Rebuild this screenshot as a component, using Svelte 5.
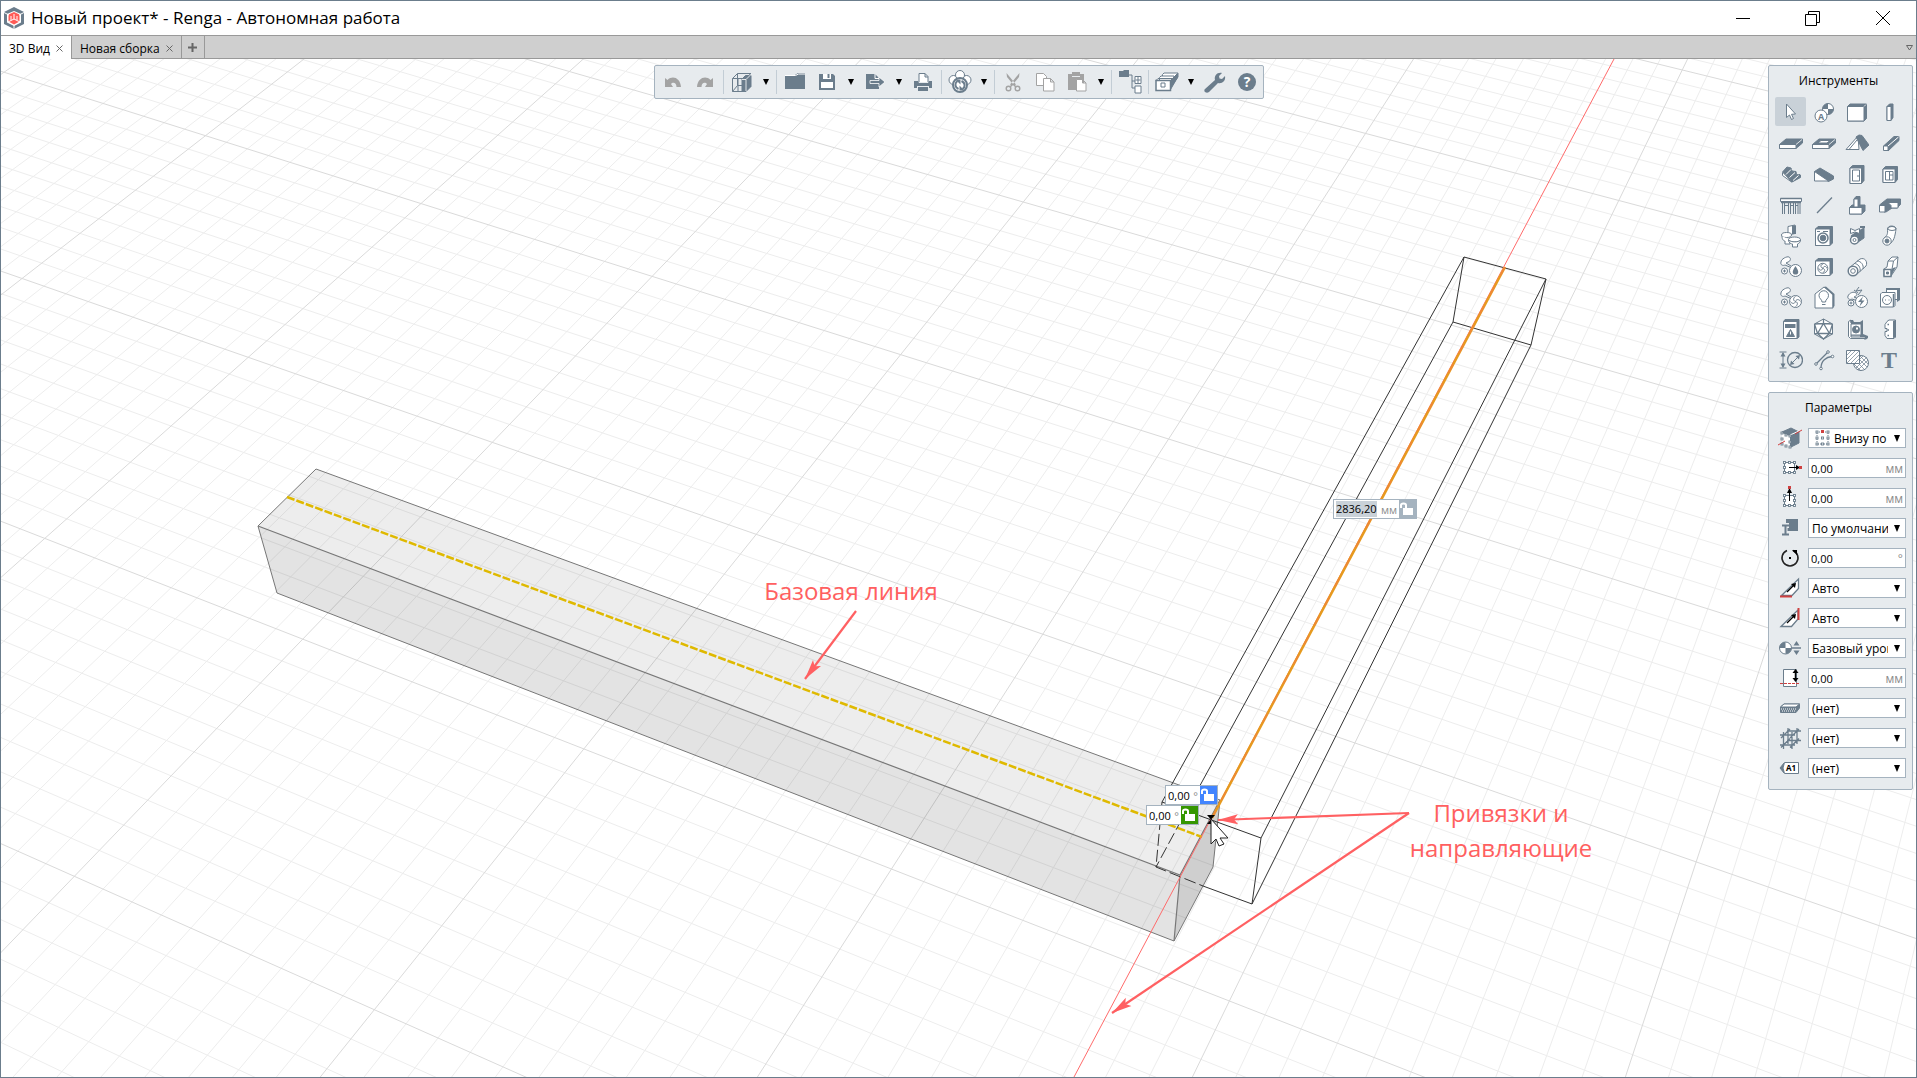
<script>
    let activeTab = $state('3D Вид');
    let activeTool = $state('select');

    const tabs = ['3D Вид', 'Новая сборка'];

    const toolbar = [
        { icon: 'undo', label: 'Отменить', off: true },
        { icon: 'redo', label: 'Повторить', off: true },
        { sep: true },
        { icon: 'cube', label: 'Вид', menu: true },
        { sep: true },
        { icon: 'folder', label: 'Открыть' },
        { icon: 'save', label: 'Сохранить', menu: true },
        { icon: 'export', label: 'Экспорт', menu: true },
        { icon: 'print', label: 'Печать' },
        { sep: true },
        { icon: 'sync', label: 'Совместная работа', menu: true },
        { sep: true },
        { icon: 'cut', label: 'Вырезать', off: true },
        { icon: 'copy', label: 'Копировать', off: true },
        { icon: 'paste', label: 'Вставить', off: true, menu: true },
        { sep: true },
        { icon: 'tree', label: 'Обозреватель проекта' },
        { sep: true },
        { icon: 'drawers', label: 'Стили', menu: true },
        { icon: 'wrench', label: 'Настройки' },
        { icon: 'help', label: 'Справка' }
    ];

    const tools = [
        ['select', 'Выбор'], ['level', 'Уровень'], ['wall', 'Стена'], ['column', 'Колонна'],
        ['floor', 'Перекрытие'], ['opening', 'Проем'], ['roof', 'Крыша'], ['beam', 'Балка'],
        ['stair', 'Лестница'], ['ramp', 'Пандус'], ['door', 'Дверь'], ['window', 'Окно'],
        ['railing', 'Ограждение'], ['line', 'Линия'], ['footing', 'Столбчатый фундамент'], ['strip', 'Ленточный фундамент'],
        ['toilet', 'Сантехника'], ['washer', 'Оборудование'], ['valve', 'Арматура'], ['pipe', 'Труба'],
        ['water', 'Трубопровод'], ['fan', 'Вентиляция'], ['duct', 'Деталь воздуховода'], ['ductbend', 'Воздуховод'],
        ['air', 'Система вентиляции'], ['lamp', 'Светильник'], ['electric', 'Электрика'], ['socket', 'Розетка'],
        ['panel', 'Щит'], ['element', 'Элемент'], ['assembly', 'Сборка'], ['plate', 'Пластина'],
        ['dimension', 'Размер'], ['route', 'Трасса'], ['hatch', 'Штриховка'], ['text', 'Текст']
    ];

    const params = [
        { icon: 'pLine', label: 'Положение базовой линии', value: 'Внизу по центру', kind: 'select', mark: true },
        { icon: 'pHor', label: 'Смещение по горизонтали', value: '0,00', unit: 'мм' },
        { icon: 'pVer', label: 'Смещение по вертикали', value: '0,00', unit: 'мм' },
        { icon: 'pStyle', label: 'Стиль', value: 'По умолчанию', kind: 'select' },
        { icon: 'pAngle', label: 'Угол поворота', value: '0,00', unit: '°' },
        { icon: 'pStart', label: 'Обрезка начала', value: 'Авто', kind: 'select' },
        { icon: 'pEnd', label: 'Обрезка конца', value: 'Авто', kind: 'select' },
        { icon: 'pLevel', label: 'Уровень', value: 'Базовый уровень', kind: 'select' },
        { icon: 'pOffset', label: 'Смещение от уровня', value: '0,00', unit: 'мм' },
        { icon: 'pMaterial', label: 'Материал', value: '(нет)', kind: 'select' },
        { icon: 'pRebar', label: 'Армирование', value: '(нет)', kind: 'select' },
        { icon: 'pMark', label: 'Марка', value: '(нет)', kind: 'select' }
    ];

    // floor plane to screen, u and v count the major cells
    function project(u, v) {
        const w = 1 - 0.0338 * u - 0.0731 * v;
        return [
            ((201.3 * u - 185 * v + 205.4) / w).toFixed(1),
            ((61 * u + 122.4 * v + 135.7) / w).toFixed(1)
        ];
    }

    let minor = '';
    let major = '';
    for (let i = -80; i <= 100; i++) {
        const u = i / 10;
        const d = 'M' + project(u, -8) + 'L' + project(u, 6);
        if (i % 10 === 0) major += d;
        else minor += d;
    }
    for (let i = -80; i <= 60; i++) {
        const v = i / 10;
        const d = 'M' + project(-6, v) + 'L' + project(10, v);
        if (i % 10 === 0) major += d;
        else minor += d;
    }

    const nodes = (list, r = 1) =>
        list.map(([x, y]) => `<rect x="${x - r}" y="${y - r}" width="${r * 2}" height="${r * 2}" fill="#fff" stroke-width=".9"/>`).join('');
    const fanBlades = (x, y, r) =>
        `<circle cx="${x}" cy="${y}" r="${r}" fill="#fff"/><path stroke-width="1" d="M${x} ${y}c-3-1-2-4 0-${r - 1}M${x} ${y}c1-3 4-2 ${r - 1} 0M${x} ${y}c3 1 2 4 0 ${r - 1}M${x} ${y}c-1 3-4 2-${r - 1} 0"/>`;
    const pipes =
        '<path fill="#fff" d="M2 7c0-3 6-6 8-5s2 4-1 5l-2 1 5 3M2 7c-1 3 2 4 4 3l7 3"/><circle cx="5.500" cy="16" r="3" fill="#fff"/><path d="M5.500 14.500v3M4 16h3"/>';

    const icons = {
        undo: '<path fill="currentColor" stroke="none" d="M4 8l2.500 2c5-5 13-2 13.500 7h-4.500c0-5-4-5-5.500-3l2 3H4z"/>',
        redo: '<path fill="currentColor" stroke="none" d="M20 8l-2.500 2c-5-5-13-2-13.500 7h4.500c0-5 4-5 5.500-3l-2 3h8z"/>',
        cube: '<path d="M2.500 8.500h11v13h-11zM2.500 8.500l5-5h13.500l-6 5M7.500 3.500v12h7M7.500 15.500l-5 6M8 9v12"/><path fill="currentColor" d="M12 9l3.500-3.500H21v11l-5 5h-4z"/><path stroke="#fff" stroke-width=".8" d="M16 21V9.500l5-5M12 9.500h4"/>',
        folder: '<path fill="currentColor" stroke="none" d="M2 5h10l3-2h7v16H2z"/><path stroke="#fff" d="M2 5.500h10.500l3-1.500H22"/>',
        save: '<path fill="currentColor" stroke="none" d="M4 4h14l2 2v14H4z"/><path fill="#fff" stroke="none" d="M8 4h8v5H8zM6 12h12v6H6z"/><path fill="currentColor" stroke="none" d="M12.500 4h2v4h-2z"/>',
        export: '<path fill="currentColor" stroke="none" d="M3 4h9l4 4v11H3z"/><path stroke="#fff" d="M12 4v4.500h4"/><path fill="currentColor" stroke="#fff" stroke-width=".8" d="M7 10.500h9V7l6 5-6 5v-3.500H7z"/>',
        print: '<path fill="#fff" d="M8 12V3.500h6l3 3V12M14 3.500V7h3"/><path fill="currentColor" stroke="none" d="M3 11h4l1 2h9l1-2h3v7h-3v-2H6v2H3zM7 17h10v4H7z"/>',
        sync: '<circle cx="5.500" cy="10" r="4.500" fill="#fff"/><circle cx="18.500" cy="10" r="4.500" fill="#fff"/><circle cx="12" cy="5" r="4.500" fill="#fff"/><circle cx="12" cy="15" r="7" fill="#fff" stroke-width="2"/><path stroke-width="2" d="M10.500 19c-4-2-4-6-1-8M13.500 11c4 2 4 6 1 8"/><path fill="currentColor" stroke="none" d="M7.500 9.500h5v5zM16.500 20.500h-5v-5z"/>',
        cut: '<path fill="currentColor" stroke="none" d="M5.500 3l.5 4 7 8.500 2-1zM18.500 3l-.5 4-7 8.500-2-1z"/><circle cx="7.500" cy="18.500" r="2.300" stroke-width="1.400"/><circle cx="16.500" cy="18.500" r="2.300" stroke-width="1.400"/><path stroke-width="1.500" d="M9 17l3-3 3 3"/>',
        copy: '<path fill="#fff" d="M3.500 3.500h7l3 3v9h-10z"/><path fill="#fff" d="M10.500 8.500h7l3.500 3.500v9H10.500zM17.500 8.500V12H21"/>',
        paste: '<path fill="currentColor" stroke="none" d="M3 4h4V2h8v2h4v16H3z"/><path stroke="#e7ebee" d="M7 6.500h8"/><path fill="#fff" d="M11.500 9.500h6l3.500 3.500v8h-9.500zM17.500 9.500V13H21"/>',
        tree: '<path fill="currentColor" stroke="none" d="M1 1h4l1-1h5v7H1z"/><path d="M11 5h3v13M14 11h3M14 18h3"/><path fill="#fff" d="M17 6.500h6v7h-6zM17 16h6v7h-6zM20 7v6M17.500 10h5"/>',
        drawers: '<path fill="#fff" d="M7.500 8V4.500L9 3h14v4l-8 11"/><path fill="#fff" d="M4.500 11V7.500L6 6h13v4l-4 8"/><path fill="#fff" stroke-width="1.500" d="M1 10.500h14.500v10H1z"/><path fill="currentColor" d="M15.500 10.500l7-7v4l-7 12z"/><path d="M6 13h4v4H6zM1 10.500l2-2h14"/>',
        wrench: '<path fill="currentColor" stroke="none" d="M2 19l10-9c-1-4 2-8 7-7l-3 3 .5 2.500 2.500.5 3-3c1 5-3 8-7 7l-9 9c-3 2-6-1-4-3z"/>',
        help: '<circle cx="12" cy="12" r="9" fill="currentColor" stroke="none"/><text x="12" y="17" text-anchor="middle" font-size="14" font-weight="700" fill="#fff" stroke="none">?</text>',

        select: '<path fill="#fff" d="M7.500 4v13.500l3-2.500 2 4.500 2-1-2-4.200 4-.3z"/>',
        level: '<circle cx="16" cy="9" r="5.500" fill="#fff"/><path fill="currentColor" stroke="none" d="M16 9V3.500A5.500 5.500 0 0 0 10.500 9zM16 9v5.500A5.500 5.500 0 0 0 21.500 9z"/><circle cx="9" cy="16" r="6" fill="#fff"/><text x="9" y="19.500" text-anchor="middle" font-size="9" font-weight="700" fill="currentColor" stroke="none">A</text>',
        wall: '<path fill="currentColor" d="M2.500 6.500L5 4h16.500v14.500L19 21H2.500z"/><path fill="#fff" d="M2.500 6.500H19V21H2.500z"/><path stroke="#fff" stroke-width=".8" d="M19 6.500L21 4.500"/>',
        column: '<path fill="currentColor" d="M9 6.500L11.500 4H15v13.500L13 20.500H9z"/><path fill="#fff" d="M9 6.500h4v14H9z"/>',
        floor: '<path fill="currentColor" d="M.5 13.500L7 8h16.500v4l-6.500 5.500H.5z"/><path fill="#fff" d="M.5 13.500H17v4H.5z"/><path stroke="#fff" stroke-width=".8" d="M17 13.500L23 8.500"/>',
        opening: '<path fill="currentColor" d="M.5 13.500L7 8h16.500v4l-6.500 5.500H.5z"/><path fill="#fff" d="M.5 13.500H17v4H.5zM6 12l3-2.500h9L15 12z"/><path stroke="#fff" stroke-width=".8" d="M17 13.500L23 8.500"/>',
        roof: '<path fill="#fff" d="M1 18.500L13 5l1 13.500z"/><path fill="currentColor" d="M11 6l3-2 3 .5 7 9.500-6 5.500z"/><path d="M4 18.500L12 9"/>',
        beam: '<path fill="currentColor" d="M5.500 15L16 5.500h5v4L10 20z"/><path fill="#fff" d="M5.500 15H10v4.500H5.500z"/><path stroke="#fff" d="M10 15L20.500 6"/>',
        stair: '<path fill="#fff" d="M3.500 10.500v3l9 6.500 8-5v-3"/><path fill="currentColor" d="M3.500 10l4.500-5 4 1 1 3 4 .5.500 3 4 .5v2.500L13 20z"/><path stroke="#fff" d="M7 12.500l5-5M10.500 15.500l5.500-5M14 18.500l5.500-5"/>',
        ramp: '<path fill="currentColor" d="M2.500 9.500L8 6l13.500 8v3l-5 2.500z"/><path fill="#fff" d="M2.500 9.500v9.500h14z"/>',
        door: '<path fill="currentColor" d="M5 6l2.500-2.500H19v15L16.500 21.500H5z"/><path fill="#fff" d="M5 6h11.500v15.500H5z"/><path d="M7.500 8h7v11h-7zM12 14h2"/>',
        window: '<path fill="currentColor" d="M5 7l2.500-2.500H19.500v13L17 20.500H5z"/><path fill="#fff" d="M5 7h12v13.500H5z"/><path d="M7.500 9.500H15V18H7.500zM11.500 9.500V18M11.500 13H15"/>',
        railing: '<path fill="#fff" d="M1.500 5.500h21v3h-21z"/><path d="M1.500 5.500h21M2 9.500h20" stroke-width="1.500"/><path d="M3.500 10v11M5.500 10v11M9.500 10v11M11.500 10v11M14.500 10v11M16.500 10v11M19 10v11M21 10v11M5.500 12.500h4M11.500 12.500h3M16.500 12.500H19"/>',
        line: '<path stroke-width="1.300" d="M5 20L20 4.500"/>',
        footing: '<path fill="currentColor" d="M4.500 14.500L7 12h13v6l-3 3H4.500zM9 6l2-2.500h4V12l-2 3H9z"/><path fill="#fff" d="M4.500 14.500H17V21H4.500z"/><path fill="#fff" d="M9 6h4v8H9z"/>',
        strip: '<path fill="currentColor" d="M1.500 12L9 6h13.500v5.500L19 15h-5l-6 4H6z"/><path fill="#fff" d="M1.500 12.500H7V19H1.500z"/><path fill="#fff" d="M10 9.500h10V15h-7v-2.500z"/>',
        toilet: '<path fill="#fff" d="M9 2.500l7-1.500v8.500L9 11z"/><path fill="currentColor" stroke="none" d="M13 1.500h4V10h-4z"/><ellipse cx="7.500" cy="11" rx="5" ry="2.500" fill="#fff"/><path fill="#fff" d="M3 12c0 4 2 5 3 5v3h5v-4"/><ellipse cx="15.500" cy="15.500" rx="6" ry="2.500" fill="#fff"/><path fill="#fff" d="M9.500 16c0 3 3 4 4 4v3h5v-3c2-1 3-2 3-4-2 2.500-9 2.500-12 0z"/>',
        washer: '<path fill="currentColor" d="M3.500 5L6 2.500h14.500V19L18 21.500H3.500z"/><path fill="#fff" d="M3.500 5H18v16.500H3.500z"/><circle cx="11" cy="14" r="5" fill="#fff" stroke-width="1.500"/><circle cx="11" cy="14" r="2.800" fill="currentColor"/><path d="M5 7.500h3M11 7.500h5"/>',
        valve: '<path fill="currentColor" d="M6 12l4-3 9-5v10l-8 5.500z"/><path fill="#fff" d="M5.500 4.500l4.500 2 4.500-2v5l-4.500-1.500-4.500 1.500z"/><circle cx="9.500" cy="16" r="4" fill="#fff" stroke-width="1.500"/><circle cx="9.500" cy="16" r="1.500"/><path stroke-width="2" d="M15 3h5"/>',
        pipe: '<path fill="#fff" d="M9.500 5c0-4 8-4 8.500 0-1 7-2 13-7 15L6 14c3-2 4-4 3.500-9z"/><ellipse cx="14" cy="4.500" rx="4" ry="2"/><circle cx="9" cy="17" r="4.200" fill="#fff"/><circle cx="9" cy="17" r="2" fill="currentColor"/>',
        water: pipes + '<circle cx="16.500" cy="15.500" r="6" fill="#fff"/><path fill="currentColor" stroke="none" d="M16.500 11c5 7 2 8.500 0 8.500s-5-1.500 0-8.500z"/>',
        fan: '<path fill="currentColor" d="M3.500 6L6 3.500h14.500V18L18 20.500H3.500z"/><path fill="#fff" d="M3.500 6H18v14.500H3.500z"/>' + fanBlades(10.8, 13.3, 5),
        duct: '<path fill="#fff" d="M4 13L15 4c5-2 8 3 6 7L11 20z"/><path d="M9 8.500c4 0 7 4 6 8M12 6c4 0 7 4 6 8"/><circle cx="8" cy="16" r="4.800" fill="#fff" stroke-width="1.500"/><circle cx="8" cy="16" r="2.300"/>',
        ductbend: '<path fill="#fff" d="M10 6l4-4h6l-1 10-6 9H6v-7l3-2z"/><path d="M10 6h5.500l4.500-4M15.500 6l-1.500 8"/><path fill="currentColor" stroke="none" d="M13 15l2-2 3-1-5 9z"/><path fill="#fff" stroke-width="1.500" d="M6 14.500h7v7H6z"/><path fill="currentColor" d="M8.500 17h2v2h-2z"/>',
        air: pipes + fanBlades(16.5, 15.5, 6),
        lamp: '<path fill="#fff" d="M3 8l9-7 9 7v14H3z"/><path fill="currentColor" stroke="none" d="M12 1l2-.5L22.500 8v12l-2 2V9z"/><path d="M10 16c0-3-3-3-3-6.500a4.500 4.500 0 0 1 9.500 0c0 3.500-3 3.500-3 6.500zM10 18.500h3.500"/>',
        electric: '<path d="M14 1l-3 4 6-1-4 5M9 4l4 3"/><path fill="#fff" d="M3 10c1-3 6-5 8-3s0 3-2 4l5 2M3 10c-1 3 2 4 4 3l6 2"/><circle cx="6" cy="17" r="3" fill="#fff"/><path d="M6 15.500v3M4.500 17h3"/><circle cx="16.500" cy="15.500" r="6" fill="#fff"/><path fill="currentColor" stroke="none" d="M18 10.500l-5 5.500h3l-1.500 4.500 5-6h-3z"/>',
        socket: '<path fill="#fff" d="M8.500 2.500h11v11h-11z"/><path fill="currentColor" stroke="none" d="M8 2h14v12l-3 2V4H8z"/><path fill="#fff" d="M2.500 8L4 6.500h13v13L15.500 21h-13z"/><circle cx="9" cy="14" r="4.500"/><path d="M7 14h1M10.500 14h1"/><path stroke-width="1.500" d="M15.500 8v13"/>',
        panel: '<path fill="currentColor" d="M4.500 4.500L6 2.500h14V20l-2 1.500H4.500z"/><path fill="#fff" d="M4.500 4.500H18v17H4.500z"/><path fill="currentColor" stroke="none" d="M6 7h10.500v4H6z"/><path fill="currentColor" d="M11.500 12.500l4 7h-8z"/><path stroke="#fff" d="M11.500 14.500v3"/>',
        element: '<path fill="#fff" d="M11.500 2l9 5v10l-9 5-9-5V7z"/><path stroke-width="1.300" d="M11.500 6.500l6 10h-12zM11.500 2v4.500M2.500 7l9-.5 9 .5M2.500 7l3 9.500-3 .5M20.500 7l-3 9.500 3 .5M5.500 16.500l6 5.500 6-5.500"/>',
        assembly: '<path fill="#fff" d="M3.500 4.500L6 3v3h9v12H6v2h15v1.500H5.500l-2-2z"/><path fill="currentColor" stroke="none" d="M5 3h3l1 2h6l3-2v14l5 2v2l-2 1.500h-2l1-2.500h-5V7H6z"/><path fill="#fff" d="M6 7h10v11H6z"/><circle cx="11" cy="12.500" r="3.500" fill="currentColor"/><path fill="#fff" stroke="none" d="M11 10.500h2v2h-2z"/>',
        plate: '<path fill="#fff" d="M9 4.500L11 3h6.500v17L16 21.500H9l-2-3v-4h2v-3H7v-4z"/><path fill="currentColor" stroke="none" d="M15 4l2.500-1v17.500L15 21z"/><path stroke-width="1.600" d="M9.500 7.500h1.500M9.500 13h1.500M9.500 18.500h1.500"/>',
        dimension: '<path d="M.5 4h7M.5 20h7M4 5v14"/><path fill="currentColor" stroke="none" d="M4 4l2.500 4.500h-5zM4 20l2.500-4.500h-5z"/><circle cx="16" cy="12" r="7.500" stroke-width="1.300"/><path d="M12 16l8-8"/><path fill="currentColor" stroke="none" d="M21 7l-1 4.500L16.500 8zM11 17l1-4.500 3.500 3.500z"/>',
        route: '<path stroke-width="1.300" d="M4 16L15.500 4.500M9 20c0-7 5-11 11-11.500"/><g fill="#fff"><circle cx="4" cy="16" r="1.300"/><circle cx="16" cy="4" r="1.300"/><circle cx="9" cy="20.500" r="1.300"/><circle cx="20.500" cy="8.500" r="1.300"/></g>',
        hatch: '<circle cx="16" cy="15" r="7.500" fill="#fff"/><path stroke-width=".7" d="M10 12l9 9M12 9l10 10M15 8l8 8M9 16l7 7M23 12l-10 10M22 9L11 20M18 8L9 17"/><path fill="#fff" d="M1.500 2.500h13v13h-13z"/><path stroke-width=".7" d="M2 7l4-4M2 11l8-8M2 15l12-12M6 15l8-8M10 15l4-4"/>',
        text: '<text x="11" y="20" text-anchor="middle" font-family="Liberation Serif, serif" font-size="24" font-weight="700" fill="currentColor" stroke="none">T</text>',

        pLine: '<path fill="currentColor" d="M4 6l9-4 8 4v11l-8 4z"/><path fill="#fff" stroke="none" d="M4 7l8 3v12l-8-4z"/><path stroke="#fff" d="M12 9l9-4"/>' + nodes([[4, 7], [8, 9], [12, 10], [4, 13], [4, 18], [8, 20], [12, 16], [12, 21]]) + '<path stroke="#cf4040" d="M0 19l7-4M17 8l7-4"/>',
        pHor: '<path fill="#fff" d="M6.500 6.500h10v10h-10z"/>' + nodes([[6.5, 6.5], [11.5, 6.5], [16.5, 6.5], [6.5, 11.5], [6.5, 16.5], [11.5, 16.5], [16.5, 16.5]]) + '<path stroke="#000" d="M11 11.500h9"/><path fill="#000" stroke="none" d="M18 9l4 2.500-4 2.500z"/><path fill="#cf4040" stroke="none" d="M21 10h3v3h-3z"/>',
        pVer: '<path fill="#fff" d="M6.500 9.500h10v10h-10z"/>' + nodes([[6.5, 9.5], [16.5, 9.5], [6.5, 14.5], [16.5, 14.5], [6.5, 19.5], [11.5, 19.5], [16.5, 19.5]]) + '<path stroke="#000" d="M11.500 15V4"/><path fill="#000" stroke="none" d="M9 7l2.500-5L14 7z"/><path fill="#cf4040" stroke="none" d="M10 0h3v3h-3z"/>',
        pStyle: '<path fill="currentColor" stroke="none" d="M8 3h12v12H8z"/><path stroke="#e7ebee" stroke-width="5" d="M3 9.500h8M7 9v10M3 18.500h8"/><path stroke-width="2" d="M4 9.500h7M4 18.500h7M7.500 9v10"/>',
        pAngle: '<path stroke="#222" stroke-width="1.500" d="M9 4.500a8 8 0 1 0 6 0"/><path fill="#000" stroke="none" d="M14 4h5v5zM11 11h2v2h-2z"/>',
        pStart: '<path fill="#fff" stroke-width="1.300" d="M3.500 19.500L20.500 3v9.500L14 19.500z"/><path stroke="#000" stroke-width="1.300" d="M9 16l7-7"/><path fill="#000" stroke="none" d="M18 7l-1 5L13 8z"/><path stroke="#cf4040" stroke-width="2" d="M2 20.500h12"/>',
        pEnd: '<path fill="#fff" stroke-width="1.300" d="M3 20.500L20 4v9L13.500 20.500z"/><path stroke="#000" stroke-width="1.300" d="M9 17l7-7"/><path fill="#000" stroke="none" d="M18 8l-1 5L13 9z"/><path stroke="#cf4040" stroke-width="2" d="M20.500 2v12"/>',
        pLevel: '<circle cx="7.500" cy="12" r="6" fill="#fff"/><path fill="currentColor" stroke="none" d="M7.500 12V6a6 6 0 0 0-6 6zM7.500 12v6a6 6 0 0 0 6-6z"/><path stroke-width="1.500" d="M14 12h9"/><path fill="currentColor" stroke="none" d="M18.500 5l3 4.500h-6zM18.500 19l3-4.500h-6z"/>',
        pOffset: '<path fill="#fff" d="M5.500 3.500h13v17h-13z"/><path stroke="#cf4040" stroke-dasharray="3 1" d="M2 17.500h19"/><path stroke="#000" stroke-width="1.500" d="M17.500 5v9"/><path fill="#000" stroke="none" d="M17.500 3l3 4h-6zM17.500 16l3-4h-6z"/>',
        pMaterial: '<path fill="currentColor" d="M2.500 11L6 8h15.500v4L18 16.500H2.500z"/><path fill="#fff" d="M2.500 11L6 8h15.500L18 11z"/><path stroke="#fff" stroke-dasharray="1 1" d="M3 13h15M4 15h14"/>',
        pRebar: '<path stroke-width="1.300" d="M2 9h15M2 19h15M5.500 6v17M14 6v17M9 5h14M9 14.500h14M10 2v16M19 2v16M3 12l9-9M12 12l9-9M3 21.500l9-9M12 21.500l9-9"/>',
        pMark: '<path fill="currentColor" d="M2 12l4-5v10z"/><path fill="#fff" d="M6.500 6.500h14v11h-14L5 12z"/><text x="13" y="15" text-anchor="middle" font-size="8" font-weight="700" fill="#000" stroke="none">A1</text>',
        pPos: '<path stroke-dasharray="1 1" d="M6 6h11v12H6z"/>' + nodes([[6, 6], [17, 6], [6, 12], [11.5, 12], [17, 12], [6, 18], [11.5, 18], [17, 18]]) + '<path fill="#cf4040" stroke="none" d="M10 4h3v3h-3z"/>'
    };
</script>

{#snippet icon(name)}
    <svg class="icon" width="24" height="24" viewBox="0 0 24 24" fill="none" stroke="currentColor" aria-hidden="true">{@html icons[name]}</svg>
{/snippet}

{#snippet lock()}
    <svg width="17" height="18" viewBox="0 0 17 18" aria-hidden="true">
        <path fill="#fff" d="M5 8h9v7H4V8z" />
        <path fill="none" stroke="#fff" stroke-width="2" d="M2 8V5c0-2 5-2 5 0v3" />
    </svg>
{/snippet}

<div class="window">
    <header class="titlebar">
        <svg class="logo" width="22" height="24" viewBox="0 0 22 24" aria-hidden="true">
            <path fill="#6b7d8c" d="M11 1l10 5v12l-10 5-10-5V6z" />
            <path fill="#fff" d="M11 5l7 3v8.500L11 20l-7-3.500V8z" />
            <path fill="#ff5b57" d="M11 6l5.500 2.500v7L11 18.500l-5.500-3v-7z" />
            <path fill="none" stroke="#fff" d="M11 8v5M5 16l6-3 6 3M1 6.500L6 9M21 6.500L16 9M11 19v4M8 10v4M14 10v4" />
        </svg>
        <h1>Новый проект* - Renga - Автономная работа</h1>
        <div class="winbuttons">
            <button aria-label="Свернуть"><svg width="16" height="16" viewBox="0 0 16 16"><path d="M1 8.500h14" /></svg></button>
            <button aria-label="Восстановить"><svg width="16" height="16" viewBox="0 0 16 16"><path d="M.5 4.500h11v11H.5zM3.500 4.500v-3h11v11h-3" /></svg></button>
            <button aria-label="Закрыть"><svg width="16" height="16" viewBox="0 0 16 16"><path d="M1 1l14 14M15 1L1 15" /></svg></button>
        </div>
    </header>

    <nav class="tabs">
        {#each tabs as tab}
            <div class="tab" class:active={activeTab === tab}>
                <button class="name" onclick={() => (activeTab = tab)}>{tab}</button>
                <button class="close" aria-label="Закрыть вкладку"><svg width="7" height="7" viewBox="0 0 7 7"><path d="M.5.5l6 6M6.500.5l-6 6" /></svg></button>
            </div>
        {/each}
        <button class="add" aria-label="Новая вкладка"><svg width="9" height="9" viewBox="0 0 9 9"><path d="M4.500 0v9M0 4.500h9" /></svg></button>
        <button class="more" aria-label="Список вкладок"><svg width="7" height="6" viewBox="0 0 7 6"><path d="M.5.5h6l-3 4.500z" /></svg></button>
    </nav>

    <main class="viewport">
        <svg class="scene" viewBox="1 59 1915 1018" preserveAspectRatio="xMidYMid slice" fill="none">
            <defs>
                <marker id="tip" markerUnits="userSpaceOnUse" markerWidth="22" markerHeight="12" refX="20" refY="6" orient="auto">
                    <path d="M20 6L0 1l4 5-4 5z" fill="#ff6062" />
                </marker>
            </defs>
            <path d={minor} stroke="#ededed" />
            <path d={major} stroke="#dadada" />

            <!-- finished beam -->
            <path d="M316 469L1220 800L1180 875L258 526z" fill="#000" fill-opacity=".07" />
            <path d="M258 526L1180 875L1174 941L277 593z" fill="#000" fill-opacity=".11" />
            <path d="M1220 800L1213 867L1174 941L1180 875z" fill="#000" fill-opacity=".19" />
            <g stroke="#777">
                <path d="M316 469L1220 800L1213 867L1174 941L277 593L258 526z" />
                <path d="M258 526L1180 875L1220 800M1180 875L1174 941" stroke-width="1.200" />
            </g>
            <path d="M287 497L1202 837" stroke="#dfb900" stroke-width="2.500" stroke-dasharray="8 2" />

            <!-- beam being placed -->
            <g stroke="#333">
                <path d="M1464 257L1546 279L1531 345L1453 322z" />
                <path d="M1464 257L1162 802M1546 279L1261 838M1531 345L1252 904M1453 322L1197 791" />
                <path d="M1162 802L1261 838L1252 904L1203 886" />
                <path d="M1197 791L1156 867M1162 802L1156 867L1203 886" stroke-dasharray="12 4" />
            </g>
            <path d="M1614 59L1074 1077" stroke="#ff6b6b" />
            <path d="M1505 267L1212 818" stroke="#e69a1e" stroke-width="2.500" />
            <path d="M1505 267L1212 818" stroke="#f47c42" stroke-dasharray="10 12" />

            <g stroke="#ff6062" stroke-width="2.200">
                <path d="M856 611L805 679" marker-end="url(#tip)" />
                <path d="M1409 813L1218 820" marker-end="url(#tip)" />
                <path d="M1409 813L1112 1013" marker-end="url(#tip)" />
            </g>
            <g class="notes" fill="#ff5f60" text-anchor="middle">
                <text x="851" y="600">Базовая линия</text>
                <text x="1501" y="822">Привязки и</text>
                <text x="1501" y="857">направляющие</text>
            </g>

            <path d="M1207 815h8l-8 9h8z" fill="#000" />
            <path d="M1211 819v25l5-5 3 7 5-2-4-6h8z" fill="#fff" stroke="#222" />
        </svg>

        <div class="chip length">
            <input aria-label="Длина" value="2836,20" /><span>мм</span>
            <button aria-label="Закрепить длину">{@render lock()}</button>
        </div>
        <div class="chip angle blue">
            <input aria-label="Угол по вертикали" value="0,00" /><span>°</span>
            <button aria-label="Закрепить угол по вертикали">{@render lock()}</button>
        </div>
        <div class="chip angle green">
            <input aria-label="Угол в плане" value="0,00" /><span>°</span>
            <button aria-label="Закрепить угол в плане">{@render lock()}</button>
        </div>

        <div class="overlay">
            <div class="toolbar">
                {#each toolbar as item}
                    {#if item.sep}
                        <i class="sep"></i>
                    {:else}
                        <button class="tbtn" class:off={item.off} aria-label={item.label}>{@render icon(item.icon)}</button>
                        {#if item.menu}
                            <button class="drop" aria-label="{item.label}: меню"><svg width="6" height="6" viewBox="0 0 6 6"><path d="M0 0h6L3 6z" /></svg></button>
                        {/if}
                    {/if}
                {/each}
            </div>

            <aside class="side">
                <section class="panel">
                    <h2>Инструменты</h2>
                    <div class="tools">
                        {#each tools as [name, label]}
                            <button class="tool" class:active={activeTool === name} aria-label={label} onclick={() => (activeTool = name)}>{@render icon(name)}</button>
                        {/each}
                    </div>
                </section>

                <section class="panel">
                    <h2>Параметры</h2>
                    <div class="params">
                        {#each params as p}
                            <label class="param">
                                {@render icon(p.icon)}
                                <span class="field">
                                    {#if p.kind === 'select'}
                                        {#if p.mark}{@render icon('pPos')}{/if}
                                        <select aria-label={p.label}><option>{p.value}</option></select>
                                        <svg class="arrow" width="6" height="7" viewBox="0 0 6 7"><path d="M0 0h6L3 7z" /></svg>
                                    {:else}
                                        <input aria-label={p.label} value={p.value} />
                                        <span class="unit">{p.unit}</span>
                                    {/if}
                                </span>
                            </label>
                        {/each}
                    </div>
                </section>
            </aside>
        </div>
    </main>
</div>

<style>
    :global(body) {
        margin: 0;
        font-family: "Open Sans", "Noto Sans", sans-serif;
        font-size: 12px;
        color: #000;
    }
    * {
        box-sizing: border-box;
    }
    button, input, select {
        font: inherit;
        color: inherit;
        border: 0;
        padding: 0;
        margin: 0;
        background: none;
        outline: none;
    }
    button {
        display: flex;
        align-items: center;
        justify-content: center;
    }
    svg {
        display: block;
        flex: none;
    }
    .window {
        display: flex;
        flex-direction: column;
        height: 100vh;
        border: 1px solid #6b7d8c;
        background: #fff;
    }
    .titlebar {
        display: flex;
        align-items: center;
        height: 34px;
        padding-left: 2px;
    }
    h1 {
        flex: 1;
        margin: 0 0 0 6px;
        font-size: 17px;
        font-weight: 400;
        line-height: 34px;
    }
    .winbuttons {
        display: flex;
    }
    .winbuttons button {
        width: 70px;
        height: 34px;
        padding-left: 4px;
    }
    .winbuttons path {
        fill: none;
        stroke: #000;
    }

    .tabs {
        display: flex;
        height: 24px;
        border-top: 1px solid #999;
        background: #cfcfcf;
        box-shadow: inset 0 -1px #999;
    }
    .tab {
        display: flex;
        align-items: center;
        gap: 6px;
        padding: 2px 8px 0;
        border-right: 1px solid #999;
    }
    .tab.active {
        background: #fff;
    }
    .tabs path {
        fill: none;
        stroke: #666;
    }
    .name {
        line-height: 20px;
    }
    .add {
        width: 23px;
        border-right: 1px solid #999;
    }
    .add path {
        stroke-width: 2;
    }
    .more {
        width: 14px;
        margin-left: auto;
    }

    .viewport {
        position: relative;
        flex: 1;
        min-height: 0;
        overflow: hidden;
    }
    .scene {
        position: absolute;
        inset: 0;
        width: 100%;
        height: 100%;
    }
    .notes {
        font-size: 24px;
    }
    .overlay {
        position: relative;
        display: grid;
        grid-template-columns: 1fr auto 1fr;
        align-items: start;
        padding: 6px 3px;
    }
    .toolbar {
        grid-column: 2;
        display: flex;
        align-items: center;
        height: 34px;
        padding-left: 2px;
        border: 1px solid #a5b3bf;
        border-radius: 2px;
        background: #e7ebee;
    }
    .tbtn {
        width: 32px;
        height: 32px;
        color: #6b7d8c;
    }
    .off {
        color: #a3a3a3;
    }
    .drop {
        width: 16px;
        height: 32px;
    }
    .sep {
        width: 1px;
        height: 24px;
        margin: 0 2px;
        background: #c3cdd5;
    }

    .side {
        grid-column: 3;
        justify-self: end;
        display: flex;
        flex-direction: column;
        gap: 10px;
        width: 145px;
    }
    .panel {
        padding: 0 6px 7px;
        border: 1px solid #a5b3bf;
        border-radius: 2px;
        background: #e7ebee;
    }
    h2 {
        margin: 0 4px 1px 0;
        font-size: 12px;
        font-weight: 400;
        line-height: 30px;
        text-align: center;
    }
    .tools {
        display: grid;
        grid-template-columns: repeat(4, 31px);
        grid-auto-rows: 29px;
        gap: 2px;
    }
    .tool {
        border-radius: 2px;
        color: #6b7d8c;
    }
    .tool.active {
        background: #c9d1d8;
    }
    .params {
        display: flex;
        flex-direction: column;
        gap: 10px;
        padding: 4px 0;
    }
    .param {
        display: flex;
        align-items: center;
        justify-content: space-between;
        height: 20px;
        padding-left: 3px;
        color: #6b7d8c;
    }
    .field {
        display: flex;
        align-items: center;
        width: 98px;
        height: 20px;
        padding: 0 2px;
        border: 1px solid #a5b3bf;
        background: #fff;
    }
    .field input, .field select {
        flex: 1;
        width: 0;
        height: 18px;
        color: #000;
    }
    .field input {
        font-size: 11px;
    }
    .field select {
        appearance: none;
        margin-right: 6px;
        padding-left: 1px;
        overflow: hidden;
        text-overflow: clip;
    }
    .field .arrow {
        margin-right: 3px;
    }
    .field .icon {
        margin-right: -2px;
    }
    .arrow path {
        fill: #000;
    }
    .unit {
        color: #8c8c8c;
    }

    .chip {
        position: absolute;
        display: flex;
        align-items: center;
        height: 20px;
        padding-left: 2px;
        border: 1px solid #a5b3bf;
        background: #fff;
        font-size: 11px;
    }
    .chip input {
        flex: 1;
        width: 0;
    }
    .chip span {
        margin-right: 2px;
        color: #8c8c8c;
    }
    .chip button {
        width: 17px;
        height: 18px;
        background: #a5b3bf;
    }
    .angle {
        width: 53px;
    }
    .length {
        left: 1332px;
        top: 440px;
        width: 84px;
    }
    .length input {
        flex: none;
        width: 41px;
        margin-right: 4px;
        line-height: 16px;
        background: #c9d1d8;
    }
    .blue {
        left: 1164px;
        top: 726px;
    }
    .green {
        left: 1145px;
        top: 746px;
    }
    .blue button {
        background: #4285ff;
    }
    .green button {
        background: #359600;
    }
</style>
